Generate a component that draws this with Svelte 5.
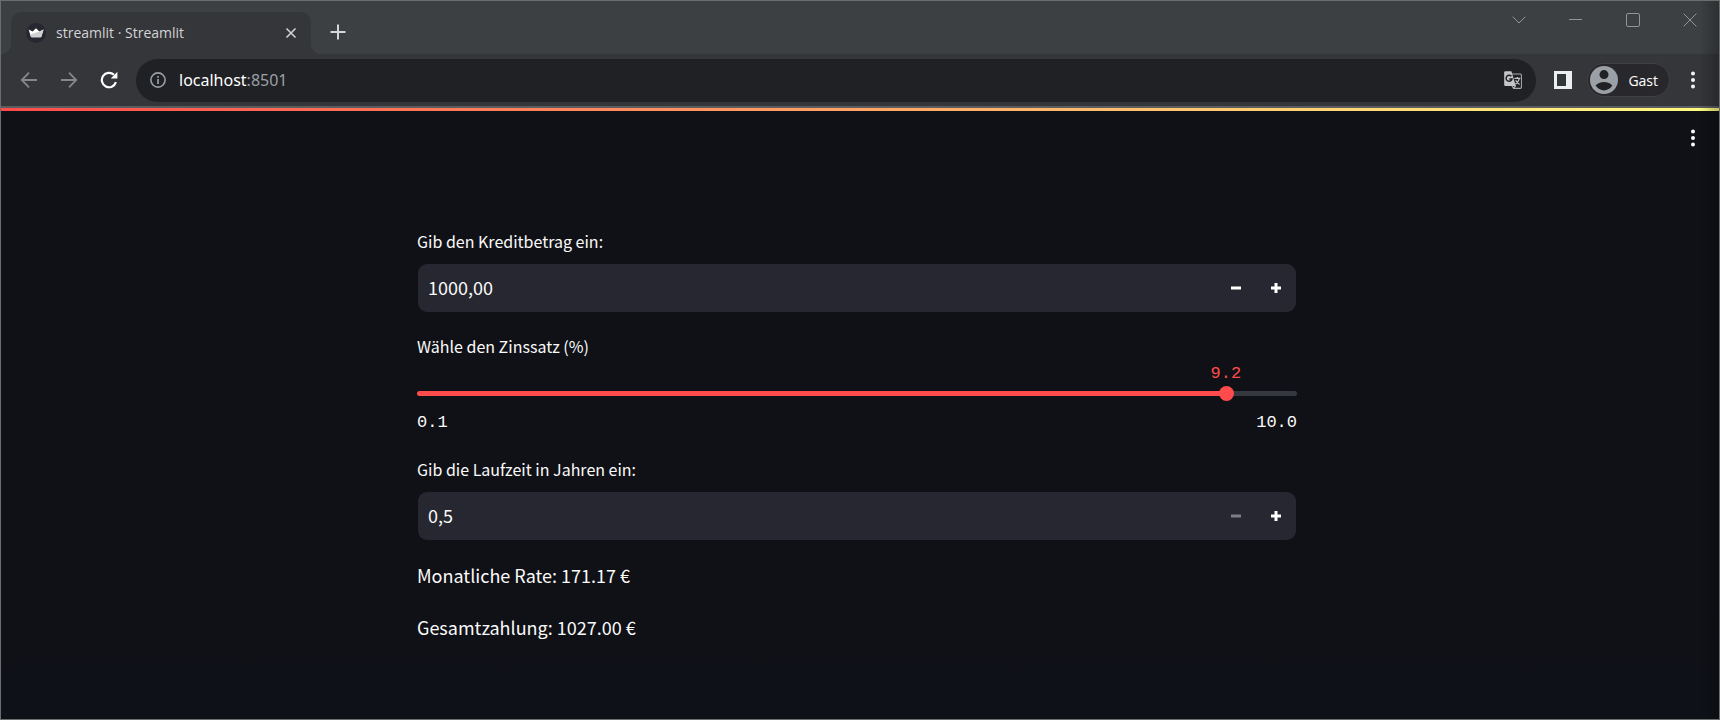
<script>
  let amount = $state('1000,00');
  let years = $state('0,5');
  let rate = $state(9.2);
  const minRate = 0.1;
  const maxRate = 10;
  let percent = $derived(((rate - minRate) / (maxRate - minRate)) * 100);

  const parse = (text) => parseFloat(text.replace(',', '.')) || 0;
  const format = (value, digits) => value.toFixed(digits).replace('.', ',');

  let months = $derived(parse(years) * 12);
  let monthly = $derived.by(() => {
    const r = rate / 100 / 12;
    return (parse(amount) * r) / (1 - Math.pow(1 + r, -months));
  });
  let monthlyText = $derived(monthly.toFixed(2));
  let totalText = $derived((monthly * months).toFixed(2));

  function stepAmount(delta) {
    amount = format(Math.max(0, parse(amount) + delta), 2);
  }
  function stepYears(delta) {
    years = format(Math.max(0.5, parse(years) + delta), 1);
  }
</script>

<div class="window">
  <header class="titlebar">
    <div class="tab">
      <svg class="favicon" width="20" height="20" viewBox="0 0 20 20" aria-hidden="true">
        <circle cx="10" cy="10" r="10" fill="#262730" />
        <path d="M2.600 6.400 6.600 8.600 10 5.200l3.400 3.400 4.200-2.200-2.200 7.200q-.2.600-.8.600h-9q-.6 0-.8-.6z" fill="#fff" />
        <path d="M4.200 11.600 13.400 8.600l4.200-2.200-2.200 7.200q-.2.600-.8.600H5.600q-.6 0-.8-.6z" fill="#d0d0d4" />
      </svg>
      <span class="tab-title">streamlit · Streamlit</span>
      <button class="tab-close" aria-label="Tab schließen">
        <svg width="12" height="12" viewBox="0 0 12 12"><path d="M1.500 1.500l9 9M10.500 1.500l-9 9" stroke="#cfd1d4" stroke-width="1.600" /></svg>
      </button>
    </div>
    <button class="new-tab" aria-label="Neuer Tab">
      <svg width="16" height="16" viewBox="0 0 16 16"><path d="M8 .5v15M.5 8h15" stroke="#d4d6d8" stroke-width="2" /></svg>
    </button>
    <div class="controls">
      <button aria-label="Tabs suchen">
        <svg width="14" height="14" viewBox="0 0 14 14"><path d="M.7 3.700 7 10l6.300-6.300" /></svg>
      </button>
      <button aria-label="Minimieren">
        <svg width="14" height="14" viewBox="0 0 14 14"><path d="M0 6.500h13" /></svg>
      </button>
      <button aria-label="Maximieren">
        <svg width="14" height="14" viewBox="0 0 14 14"><rect x=".5" y=".5" width="13" height="13" rx="1.500" /></svg>
      </button>
      <button aria-label="Schließen">
        <svg width="14" height="14" viewBox="0 0 14 14"><path d="M.6.6l12.800 12.800M13.400.6.6 13.400" /></svg>
      </button>
    </div>
  </header>

  <nav class="toolbar">
    <button class="tool" aria-label="Zurück">
      <svg width="18" height="18" viewBox="0 0 18 18" fill="none" stroke="#85878a" stroke-width="1.800"><path d="M17 9H2M9 1.600 1.800 9 9 16.400" /></svg>
    </button>
    <button class="tool" aria-label="Vorwärts">
      <svg width="18" height="18" viewBox="0 0 18 18" fill="none" stroke="#85878a" stroke-width="1.800"><path d="M1 9h15M9 1.600 16.200 9 9 16.400" /></svg>
    </button>
    <button class="tool" aria-label="Neu laden">
      <svg width="18" height="18" viewBox="0 0 18 18"><path d="M15.900 11.200A7.200 7.200 0 1 1 14 3.800" fill="none" stroke="#fff" stroke-width="2.200" /><path d="M17.400.8v6.600h-6.600z" fill="#fff" /></svg>
    </button>
    <div class="address">
      <svg width="16" height="16" viewBox="0 0 16 16" aria-hidden="true"><circle cx="8" cy="8" r="7.100" fill="none" stroke="#9aa0a6" stroke-width="1.600" /><path d="M8 7v5M8 4v1.800" stroke="#9aa0a6" stroke-width="1.700" /></svg>
      <span class="url">localhost<span class="port">:8501</span></span>
      <button class="translate" aria-label="Seite übersetzen">
        <svg width="18" height="18" viewBox="0 0 18 18">
          <path d="M8 3h8.200q1.200 0 1.200 1.200v12q0 1.200-1.200 1.200H9.600L8 15" fill="none" stroke="#aaacaf" stroke-width="1.100" />
          <path d="M1.400.2h6L11.800 15H1.400Q.2 15 .2 13.800V1.400Q.2.2 1.400.2z" fill="#c4c6c8" />
          <path d="M7.400 5.300A3 3 0 1 0 8 8H5.300" fill="none" stroke="#202124" stroke-width="1.500" />
          <path d="M9.600 5.500h7v9h-4.400z" fill="#202124" />
          <path d="M10.400 7.400h6M13.400 6v1.400M15.400 7.600q-.9 3.200-4 5.600M11.600 9.200q1.400 2.600 4 4.400M9.400 17.200l2.400-2.600" fill="none" stroke="#c0c2c4" stroke-width="1.200" />
        </svg>
      </button>
    </div>
    <button class="tool" aria-label="Seitenleiste">
      <svg width="18" height="18" viewBox="0 0 18 18"><path d="M0 0h18v18H0zM3 3v12h9V3z" fill="#eceff1" fill-rule="evenodd" /></svg>
    </button>
    <button class="profile">
      <svg width="28" height="28" viewBox="0 0 28 28" aria-hidden="true"><circle cx="14" cy="14" r="14" fill="#9aa0a6" /><circle cx="14" cy="8.600" r="4.500" fill="#202124" /><path d="M5.600 19.600Q8.600 16 14 16t8.400 3.600Q19 24.400 14 24.400T5.600 19.600z" fill="#202124" /></svg>
      <span>Gast</span>
    </button>
    <button class="tool" aria-label="Menü">
      <svg width="4" height="18" viewBox="0 0 4 18" fill="#f1f3f4"><circle cx="2" cy="2.500" r="2" /><circle cx="2" cy="9" r="2" /><circle cx="2" cy="15.500" r="2" /></svg>
    </button>
  </nav>

  <div class="app">
    <div class="decoration"></div>
    <div class="app-bar">
      <button class="tool" aria-label="App-Menü">
        <svg width="4" height="18" viewBox="0 0 4 18" fill="#fafafa"><circle cx="2" cy="2.500" r="2" /><circle cx="2" cy="9" r="2" /><circle cx="2" cy="15.500" r="2" /></svg>
      </button>
    </div>
    <div class="scroller">
      <main>
        <div class="field">
          <label for="amount">Gib den Kreditbetrag ein:</label>
          <div class="number">
            <input id="amount" type="text" inputmode="decimal" bind:value={amount} />
            <button aria-label="Verringern" onclick={() => stepAmount(-1)}>
              <svg width="10" height="10" viewBox="0 0 10 10"><path d="M0 5h10" /></svg>
            </button>
            <button aria-label="Erhöhen" onclick={() => stepAmount(1)}>
              <svg width="10" height="10" viewBox="0 0 10 10"><path d="M0 5h10M5 0v10" /></svg>
            </button>
          </div>
        </div>

        <div class="field">
          <label for="rate">Wähle den Zinssatz (%)</label>
          <div class="slider" style="--fill: {percent}%">
            <output for="rate">{rate.toFixed(1)}</output>
            <input id="rate" type="range" min={minRate} max={maxRate} step="0.1" bind:value={rate} />
          </div>
          <div class="ticks"><span>0.1</span><span>10.0</span></div>
        </div>

        <div class="field">
          <label for="years">Gib die Laufzeit in Jahren ein:</label>
          <div class="number">
            <input id="years" type="text" inputmode="decimal" bind:value={years} />
            <button aria-label="Verringern" disabled={parse(years) <= 0.5} onclick={() => stepYears(-0.5)}>
              <svg width="10" height="10" viewBox="0 0 10 10"><path d="M0 5h10" /></svg>
            </button>
            <button aria-label="Erhöhen" onclick={() => stepYears(0.5)}>
              <svg width="10" height="10" viewBox="0 0 10 10"><path d="M0 5h10M5 0v10" /></svg>
            </button>
          </div>
        </div>

        <p>Monatliche Rate: {monthlyText} €</p>
        <p>Gesamtzahlung: {totalText} €</p>
      </main>
    </div>
  </div>
</div>

<style>
  :global(body) {
    margin: 0;
    background: #101116;
  }

  .window {
    position: relative;
    display: flex;
    flex-direction: column;
    box-sizing: border-box;
    min-height: 100vh;
    border: 1px solid #6c6d6d;
    background: #101116;
    font-family: "Open Sans", "Noto Sans", sans-serif;
  }

  .window::after {
    content: "";
    position: absolute;
    inset: 0 0 0 auto;
    width: 20px;
    background: linear-gradient(to right, transparent, rgba(0, 0, 0, 0.25));
    pointer-events: none;
  }

  button {
    display: flex;
    align-items: center;
    justify-content: center;
    padding: 0;
    border: 0;
    background: none;
    color: inherit;
    font: inherit;
    cursor: pointer;
  }

  .titlebar {
    display: flex;
    height: 53px;
    background: #3c4043;
  }

  .tab {
    position: relative;
    display: flex;
    align-items: center;
    box-sizing: border-box;
    width: 300px;
    margin: 11px 0 0 10px;
    padding: 0 8px 0 15px;
    border-radius: 10px 10px 0 0;
    background: #35363a;
  }

  .tab::before,
  .tab::after {
    content: "";
    position: absolute;
    bottom: 0;
    width: 10px;
    height: 10px;
  }

  .tab::before {
    right: 100%;
    background: radial-gradient(circle at 0 0, transparent 10px, #35363a 10px);
  }

  .tab::after {
    left: 100%;
    background: radial-gradient(circle at 100% 0, transparent 10px, #35363a 10px);
  }

  .tab-title {
    flex: 1;
    margin-left: 10px;
    color: #d3d4d6;
    font-size: 14px;
    line-height: 20px;
  }

  .tab-close {
    width: 24px;
    height: 24px;
  }

  .new-tab {
    width: 32px;
    height: 32px;
    margin: 15px 0 0 11px;
  }

  .controls {
    display: flex;
    height: 37px;
    margin: 0 1px 0 auto;
  }

  .controls button {
    width: 57px;
  }

  .controls svg {
    fill: none;
    stroke: #929496;
    stroke-width: 1;
  }

  .toolbar {
    display: flex;
    align-items: center;
    height: 52px;
    padding: 0 6px 0 8px;
    border-bottom: 2px solid #5b5c5f;
    background: #35363a;
  }

  .tool {
    width: 40px;
    height: 40px;
  }

  .address {
    display: flex;
    flex: 1;
    align-items: center;
    box-sizing: border-box;
    height: 43px;
    margin: 0 7px;
    padding: 0 8px 0 14px;
    border-radius: 22px;
    background: #202124;
  }

  .url {
    flex: 1;
    margin-left: 13px;
    color: #fff;
    font-family: "Noto Sans", sans-serif;
    font-size: 16px;
    line-height: 24px;
  }

  .port {
    color: #9aa0a6;
  }

  .translate {
    width: 30px;
    height: 30px;
  }

  .profile {
    justify-content: flex-start;
    gap: 10px;
    box-sizing: border-box;
    height: 34px;
    margin: 0 3px 0 4px;
    padding: 0 11px 0 2px;
    border: 1px solid #3f4044;
    border-radius: 17px;
    background: #28282c;
    color: #fff;
    font-size: 14px;
  }

  .app {
    display: flex;
    flex: 1;
    flex-direction: column;
    background: linear-gradient(#101116 80%, #0e1118);
    color: #fafafa;
    font-family: "Noto Sans CJK SC", "Noto Sans", sans-serif;
  }

  .decoration {
    height: 3px;
    background: linear-gradient(90deg, #ff4b4b, #fffd80);
  }

  .app-bar {
    display: flex;
    justify-content: flex-end;
    padding: 7px 6px 0;
  }

  .scroller {
    padding: 71px 22px 24px 16px;
  }

  main {
    max-width: 880px;
    margin: 0 auto;
  }

  .field {
    margin-bottom: 22px;
  }

  label {
    display: block;
    margin-bottom: 11px;
    font-size: 16px;
    line-height: 24px;
  }

  .number {
    display: flex;
    height: 48px;
    margin: 0 1px;
    border-radius: 9px;
    background: #262730;
    overflow: hidden;
  }

  .number input {
    flex: 1;
    min-width: 0;
    padding: 0 10px 2px;
    border: 0;
    outline: 0;
    background: none;
    color: inherit;
    font: inherit;
    font-size: 18px;
  }

  .number button {
    width: 40px;
  }

  .number svg {
    fill: none;
    stroke: #fff;
    stroke-width: 3;
  }

  .number button:disabled svg {
    stroke: #7c7d8c;
  }

  .slider {
    position: relative;
    height: 5px;
    margin-top: 33px;
    border-radius: 3px;
    background: linear-gradient(90deg, #ff4b4b var(--fill), #363840 var(--fill));
  }

  .slider output {
    position: absolute;
    bottom: 100%;
    left: var(--fill);
    padding-bottom: 7px;
    color: #ff4b4b;
    font: 17px/20px "Liberation Mono", monospace;
    transform: translateX(-50%);
  }

  .slider input {
    position: absolute;
    top: -5px;
    left: -7px;
    width: calc(100% + 15px);
    height: 15px;
    margin: 0;
    appearance: none;
    background: none;
    cursor: pointer;
  }

  .slider input::-webkit-slider-thumb {
    width: 15px;
    height: 15px;
    border-radius: 50%;
    appearance: none;
    background: #ff4b4b;
  }

  .ticks {
    display: flex;
    justify-content: space-between;
    margin-top: 15px;
    font: 17px/24px "Liberation Mono", monospace;
  }

  p {
    margin: 0 0 26px;
    font-size: 18px;
    line-height: 26px;
  }
</style>
